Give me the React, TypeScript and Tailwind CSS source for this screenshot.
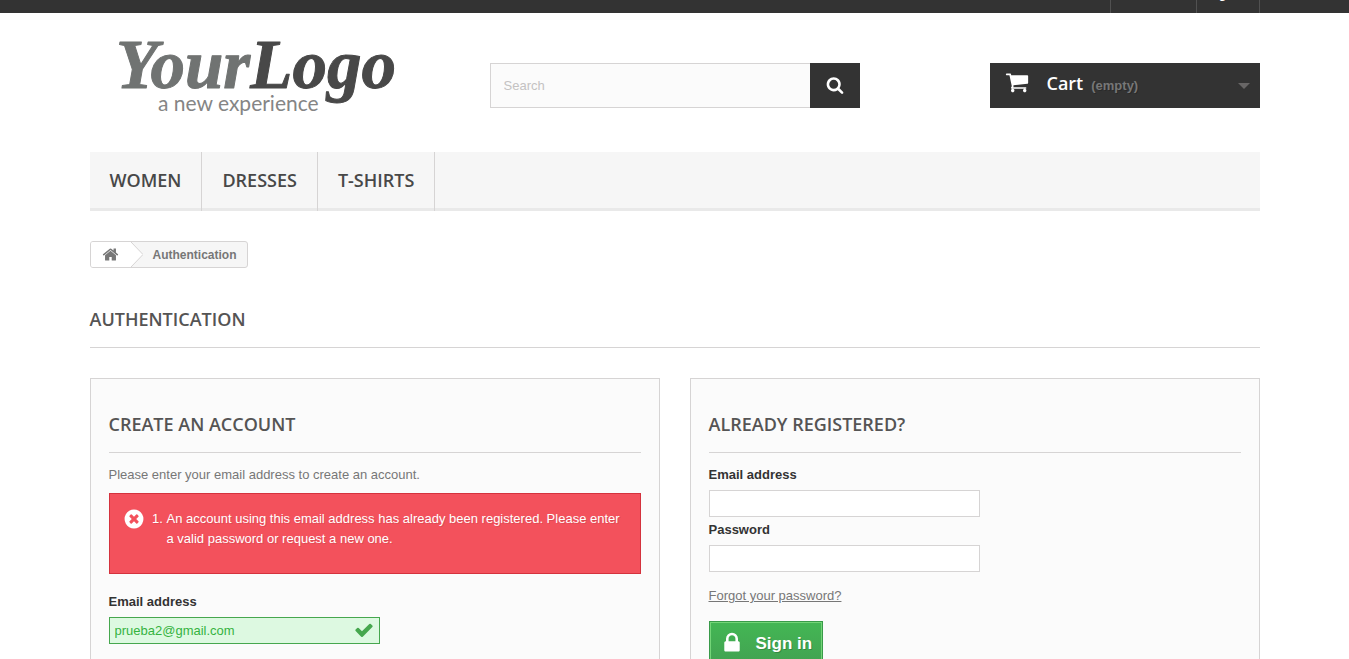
import type { ReactNode } from "react";

const HEADING = "font-['Open_Sans',sans-serif] font-semibold text-lg uppercase";

const ICONS = {
  search:
    "M1216 832q0-185-131.5-316.5t-316.5-131.5-316.5 131.5-131.5 316.5 131.5 316.5 316.5 131.5 316.5-131.5 131.5-316.5zm512 832q0 52-38 90t-90 38q-54 0-90-38l-343-342q-179 124-399 124-143 0-273.5-55.5t-225-150-150-225-55.5-273.5 55.5-273.5 150-225 225-150 273.5-55.5 273.5 55.5 225 150 150 225 55.5 273.5q0 220-124 399l343 343q37 37 37 90z",
  check:
    "M1671 566q0 40-28 68l-724 724-136 136q-28 28-68 28t-68-28l-136-136-362-362q-28-28-28-68t28-68l136-136q28-28 68-28t68 28l294 295 656-657q28-28 68-28t68 28l136 136q28 28 28 68z",
  home:
    "M1472 992v480q0 26-19 45t-45 19h-384v-384h-256v384h-384q-26 0-45-19t-19-45v-480q0-1 .5-3t.5-3l575-474 575 474q1 2 1 6zm223-69l-62 74q-8 9-21 11h-3q-13 0-21-7l-692-577-692 577q-12 8-24 7-13-2-21-11l-62-74q-8-10-7-23.5t11-21.5l719-599q32-26 76-26t76 26l244 204v-195q0-14 9-23t23-9h192q14 0 23 9t9 23v408l219 182q10 8 11 21.5t-7 23.5z",
  error:
    "M1277 1122q0-26-19-45l-181-181 181-181q19-19 19-45 0-27-19-46l-90-90q-19-19-46-19-26 0-45 19l-181 181-181-181q-19-19-45-19-27 0-46 19l-90 90q-19 19-19 46 0 26 19 45l181 181-181 181q-19 19-19 45 0 27 19 46l90 90q19 19 46 19 26 0 45-19l181-181 181 181q19 19 45 19 27 0 46-19l90-90q19-19 19-46zm387-226q0 209-103 385.5t-279.5 279.5-385.5 103-385.5-103-279.5-279.5-103-385.5 103-385.5 279.5-279.5 385.5-103 385.5 103 279.5 279.5 103 385.5z",
  lock:
    "M640 768h512v-192q0-106-75-181t-181-75-181 75-75 181v192zm832 96v576q0 40-28 68t-68 28h-960q-40 0-68-28t-28-68v-576q0-40 28-68t68-28h32v-192q0-184 132-316t316-132 316 132 132 316v192h32q40 0 68 28t28 68z",
  cart:
    "M704 1536q0 52-38 90t-90 38-90-38-38-90 38-90 90-38 90 38 38 90zm896 0q0 52-38 90t-90 38-90-38-38-90 38-90 90-38 90 38 38 90zm128-1088v512q0 24-16.5 42.5t-40.5 21.5l-1044 122q13 60 13 70 0 16-24 64h920q26 0 45 19t19 45-19 45-45 19h-1024q-26 0-45-19t-19-45q0-11 8-31.5t16-36 21.5-40 15.5-29.5l-177-823h-204q-26 0-45-19t-19-45 19-45 45-19h256q16 0 28.5 6.5t19.5 15.5 13 24.5 8 26 5.5 29.5 4.5 26h1201q26 0 45 19t19 45z",
};

function Icon({ name, className }: { name: keyof typeof ICONS; className: string }) {
  return (
    <svg viewBox="0 0 1792 1792" fill="currentColor" aria-hidden="true" className={className}>
      <path d={ICONS[name]} />
    </svg>
  );
}

function Logo() {
  return (
    <svg viewBox="0 0 350 99" role="img" aria-label="Your Logo, a new experience" className="h-[99px] w-[350px]">
      <text
        x="26"
        y="60"
        fontSize="69"
        fontWeight="700"
        fontStyle="italic"
        fontFamily="'Liberation Serif', serif"
        strokeWidth="1"
        strokeLinejoin="round"
      >
        <tspan fill="#707372" stroke="#707372">Your</tspan>
        <tspan fill="#484848" stroke="#484848">Logo</tspan>
      </text>
      <text x="68" y="83" fontSize="21" fill="#858585" fontFamily="Lato, sans-serif">
        a new experience
      </text>
    </svg>
  );
}

function Panel({ title, children }: { title: string; children: ReactNode }) {
  return (
    <section className="border border-[#d6d4d4] bg-[#fbfbfb] px-[18px] pt-[31px] pb-7">
      <h2 className={`${HEADING} border-b border-[#d6d4d4] pb-[14px] leading-7 text-[#555454]`}>{title}</h2>
      {children}
    </section>
  );
}

function Field({ id, label, type }: { id: string; label: string; type: string }) {
  return (
    <div>
      <label htmlFor={id} className="block pb-1.5 pt-[3px] font-bold leading-[19px] text-[#333333]">
        {label}
      </label>
      <input id={id} type={type} className="block h-[27px] w-[271px] border border-[#d6d4d4] bg-white px-[5px] outline-none" />
    </div>
  );
}

export default function App() {
  return (
    <div className="bg-white font-['Liberation_Sans',Arial,sans-serif] text-[13px] leading-5 text-[#777777]">
      <div className="bg-[#333333]">
        <nav
          aria-label="Account"
          className="mx-auto flex h-[13px] max-w-[1170px] items-end justify-end overflow-hidden font-bold text-white"
        >
          <a href="#contact" className="border-x border-[#515151] px-[9px] pb-[9px]">Contact us</a>
          <a href="#signin" className="border-r border-[#515151] px-[9px] pb-[9px]">Sign in</a>
        </nav>
      </div>

      <div className="mx-auto max-w-[1170px]">
        <header className="grid grid-cols-3 items-start gap-[30px] pb-[25px] pt-[15px]">
          <a href="#home"><Logo /></a>
          <form role="search" className="mt-[35px] flex h-[45px]">
            <input
              type="text"
              aria-label="Search"
              placeholder="Search"
              className="min-w-0 flex-1 border border-r-0 border-[#d6d4d4] bg-[#fbfbfb] px-[13px] outline-none placeholder:text-[#c4c2c2]"
            />
            <button type="button" aria-label="Submit search" className="flex w-[50px] items-center justify-center bg-[#333333] pb-0.5 text-white">
              <Icon name="search" className="size-[18px]" />
            </button>
          </form>
          <a href="#cart" className="mt-[35px] flex h-[45px] w-[270px] items-center justify-self-end bg-[#333333] pl-[15px] pr-[10px] text-white">
            <Icon name="cart" className="mb-2 size-6" />
            <span className="ml-[18px] flex items-baseline gap-2 pb-1.5">
              <b className="font-['Open_Sans',sans-serif] text-lg font-semibold">Cart</b>
              <span className="font-bold text-[#777777] [text-shadow:1px_1px_rgba(0,0,0,0.2)]">(empty)</span>
            </span>
            <svg viewBox="0 0 12 6" className="ml-auto h-1.5 w-3" aria-hidden="true">
              <path d="M0 0h12L6 6z" fill="#686666" />
            </svg>
          </a>
        </header>

        <nav aria-label="Categories" className={`${HEADING} flex border-b-[3px] border-[#e9e9e9] bg-[#f6f6f6] leading-6 text-[#484848]`}>
          {["Women", "Dresses", "T-shirts"].map((item) => (
            <a key={item} href={`#${item.toLowerCase()}`} className="-mb-[3px] border-r border-[#d6d4d4] px-5 pb-[19px] pt-4">
              {item}
            </a>
          ))}
        </nav>

        <nav aria-label="Breadcrumb" className="mt-[30px] flex">
          <div className="flex h-[27px] items-stretch overflow-hidden rounded-[3px] border border-[#d6d4d4] bg-[#f6f6f6] text-xs font-bold">
            <a href="#home" aria-label="Home" className="flex w-10 items-center justify-center bg-white pb-px">
              <Icon name="home" className="size-[17px]" />
            </a>
            <svg viewBox="0 0 12 25" className="h-[25px] w-3" aria-hidden="true">
              <path d="M0 0L12 12.5L0 25z" fill="#ffffff" />
              <path d="M0 0L12 12.5L0 25" fill="none" stroke="#d6d4d4" />
            </svg>
            <span className="self-center px-2.5">Authentication</span>
          </div>
        </nav>

        <main>
          <h1 className={`${HEADING} mb-[30px] mt-[37px] border-b border-[#d6d4d4] pb-[14px] leading-7 text-[#555454]`}>
            Authentication
          </h1>
          <div className="grid grid-cols-2 items-start gap-[30px]">
            <Panel title="Create an account">
              <form>
                <p className="mt-3 leading-5">Please enter your email address to create an account.</p>
                <div role="alert" className="mt-2 flex border border-[#d4323d] bg-[#f3515c] px-[13px] pb-6 pt-[14px] text-white [text-shadow:1px_1px_rgba(0,0,0,0.1)]">
                  <Icon name="error" className="size-[22px] shrink-0" />
                  <ol className="list-decimal pl-[22px] pt-px">
                    <li>
                      An account using this email address has already been registered. Please enter a valid password or
                      request a new one.
                    </li>
                  </ol>
                </div>
                <label htmlFor="new-email" className="mt-[15px] block pb-1.5 pt-[3px] font-bold leading-[19px] text-[#333333]">
                  Email address
                </label>
                <div className="relative w-[271px]">
                  <input
                    id="new-email"
                    type="email"
                    defaultValue="prueba2@gmail.com"
                    className="block h-[27px] w-full border border-[#46a74e] bg-[#ddf9e1] pl-[5px] pr-8 text-[#35b33f] outline-none"
                  />
                  <Icon name="check" className="pointer-events-none absolute right-1.5 top-[3px] size-5 text-[#46a74e]" />
                </div>
              </form>
            </Panel>

            <Panel title="Already registered?">
              <form className="pt-[9px]">
                <Field id="login-email" label="Email address" type="email" />
                <Field id="login-password" label="Password" type="password" />
                <p className="mt-[14px]">
                  <a href="#password" className="underline">Forgot your password?</a>
                </p>
                <button
                  type="button"
                  className="mt-[15px] flex border border-[#399a49] bg-linear-to-b from-[#43b754] to-[#42a151] text-[17px] font-bold text-white"
                >
                  <span className="flex items-center gap-3 border border-[#74d578] px-[9px] py-2 leading-[26px] [text-shadow:1px_1px_rgba(0,0,0,0.2)]">
                    <Icon name="lock" className="mb-0.5 size-6" />
                    Sign in
                  </span>
                </button>
              </form>
            </Panel>
          </div>
        </main>
      </div>
    </div>
  );
}
